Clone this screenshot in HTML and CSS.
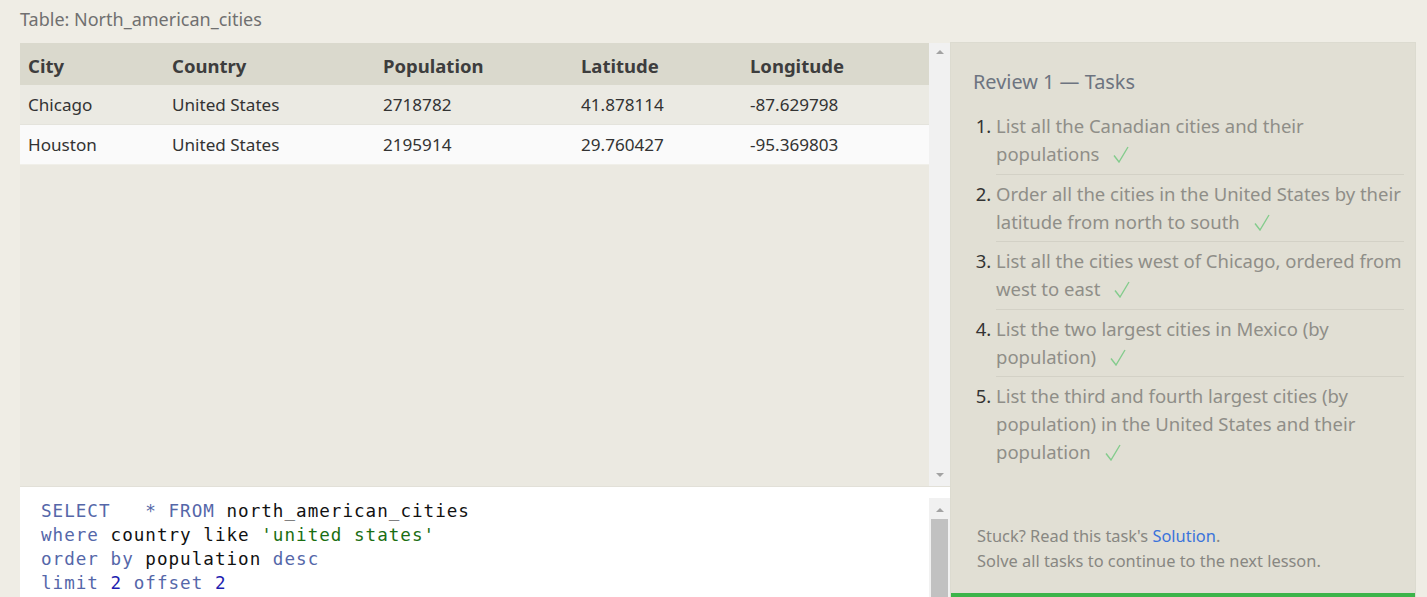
FILE: index.html
```html
<!DOCTYPE html>
<html>
<head>
<meta charset="utf-8">
<link rel="stylesheet" href="styles.css">
</head>
<body>
<div class="page">
  <div class="title">Table: North_american_cities</div>
  <div class="main">
    <div class="left">
      <div class="results">
        <div class="table-wrap">
          <table class="grid">
            <thead>
              <tr><th class="c1">City</th><th class="c2">Country</th><th class="c3">Population</th><th class="c4">Latitude</th><th class="c5">Longitude</th></tr>
            </thead>
            <tbody>
              <tr class="odd"><td>Chicago</td><td>United States</td><td>2718782</td><td>41.878114</td><td>-87.629798</td></tr>
              <tr class="even"><td>Houston</td><td>United States</td><td>2195914</td><td>29.760427</td><td>-95.369803</td></tr>
            </tbody>
          </table>
        </div>
        <div class="vscroll">
          <span class="arrow up"></span>
          <span class="arrow down"></span>
        </div>
      </div>
      <div class="editor">
        <pre class="code"><span class="kw">SELECT</span>   <span class="kw">*</span> <span class="kw">FROM</span> north_american_cities
<span class="kw">where</span> country like <span class="str">'united states'</span>
<span class="kw">order</span> <span class="kw">by</span> population <span class="kw">desc</span>
<span class="kw">limit</span> <span class="num">2</span> <span class="kw">offset</span> <span class="num">2</span></pre>
        <div class="escroll">
          <span class="arrow up"></span>
          <div class="thumb"></div>
        </div>
      </div>
    </div>
    <div class="right">
      <h2 class="heading">Review 1 — Tasks</h2>
      <ol class="tasks">
        <li>List all the Canadian cities and their populations<svg class="check" viewBox="0 0 16 17" width="16" height="17"><polyline points="1,9.5 6,16 15,1"/></svg></li>
        <li>Order all the cities in the United States by their latitude from north to south<svg class="check" viewBox="0 0 16 17" width="16" height="17"><polyline points="1,9.5 6,16 15,1"/></svg></li>
        <li>List all the cities west of Chicago, ordered from west to east<svg class="check" viewBox="0 0 16 17" width="16" height="17"><polyline points="1,9.5 6,16 15,1"/></svg></li>
        <li>List the two largest cities in Mexico (by population)<svg class="check" viewBox="0 0 16 17" width="16" height="17"><polyline points="1,9.5 6,16 15,1"/></svg></li>
        <li>List the third and fourth largest cities (by population) in the United States and their population<svg class="check" viewBox="0 0 16 17" width="16" height="17"><polyline points="1,9.5 6,16 15,1"/></svg></li>
      </ol>
      <div class="foot">
        <p>Stuck? Read this task's <a class="link" href="#">Solution</a>.</p>
        <p>Solve all tasks to continue to the next lesson.</p>
      </div>
      <div class="progress"></div>
    </div>
  </div>
</div>
</body>
</html>
```

FILE: styles.css
```css
html, body {
  margin: 0;
  padding: 0;
  background: #efede5;
  overflow: hidden;
}
body {
  font-family: "Noto Sans", "Open Sans", sans-serif;
  color: #333;
}
.page {
  width: 1427px;
  height: 597px;
  overflow: hidden;
  padding-left: 20px;
  box-sizing: border-box;
}
.title {
  height: 43px;
  line-height: 38px;
  font-size: 18px;
  color: #707070;
}
.main {
  display: flex;
  align-items: flex-start;
}
.left {
  width: 930px;
  display: flex;
  flex-direction: column;
}
.results {
  height: 443px;
  display: flex;
  background: #ebe9e1;
  border-bottom: 1px solid #e2e0d8;
}
.table-wrap {
  flex: 1;
}
.grid {
  width: 909px;
  border-collapse: collapse;
  table-layout: fixed;
}
.grid th, .grid td {
  text-align: left;
  padding: 0 0 0 8px;
  white-space: nowrap;
  box-sizing: border-box;
}
.grid th {
  height: 42px;
  padding-top: 3px;
  background: #dad9cd;
  font-weight: 700;
  font-size: 18.5px;
  color: #3d3d3d;
}
.grid td {
  height: 39.5px;
  font-size: 17.1px;
  color: #333;
}
.c1 { width: 144px; }
.c2 { width: 211px; }
.c3 { width: 198px; }
.c4 { width: 169px; }
.grid tr.odd td { background: #ebeae3; border-bottom: 1px solid #e4e3dc; }
.grid tr.even td { background: #fafafa; border-bottom: 1px solid #f0efe9; }
.vscroll {
  width: 21px;
  background: #f1f1f1;
  display: flex;
  flex-direction: column;
  justify-content: space-between;
  align-items: center;
  padding: 7px 0 9px;
  box-sizing: border-box;
}
.arrow {
  width: 0;
  height: 0;
  border-left: 4.5px solid transparent;
  border-right: 4.5px solid transparent;
}
.arrow.up { border-bottom: 4px solid #a3a3a3; }
.arrow.down { border-top: 4px solid #a3a3a3; }
.editor {
  height: 130px;
  background: #ffffff;
  display: flex;
}
.code {
  flex: 1;
  margin: 0;
  padding: 12px 0 0 21px;
  font-family: "DejaVu Sans Mono", "Liberation Mono", monospace;
  font-size: 17.6px;
  line-height: 24px;
  color: #111;
  letter-spacing: 1px;
}
.kw { color: #5567a9; }
.str { color: #1a6e12; }
.num { color: #1e1eb0; }
.escroll {
  width: 21px;
  margin-top: 11px;
  background: #f1f1f1;
  display: flex;
  flex-direction: column;
  align-items: center;
  padding-top: 10px;
  box-sizing: border-box;
}
.thumb {
  margin-top: 7px;
  width: 17px;
  flex: 1;
  background: #c1c1c1;
}
.right {
  width: 466px;
  height: 556px;
  margin-top: -1px;
  background: #e1dfd4;
  border: 1px solid #dcdbd0;
  border-bottom: none;
  box-sizing: border-box;
  display: flex;
  flex-direction: column;
}
.heading {
  margin: 24px 0 0 22px;
  font-weight: 400;
  font-size: 19.9px;
  line-height: 30px;
  color: #6d7480;
}
.tasks {
  margin: 10px 11px 0 22px;
  padding: 0 0 0 23px;
  font-size: 18.5px;
  line-height: 28px;
  color: #8f8e88;
}
.tasks li {
  padding: 5px 0 5.5px;
  border-bottom: 1px solid #d3d1c6;
}
.tasks li:last-child { border-bottom: none; }
.tasks li::marker {
  color: #333;
}
.check {
  margin-left: 14px;
  vertical-align: -2px;
  fill: none;
  stroke: #84cc8d;
  stroke-width: 1.4;
}
.foot {
  margin: auto 0 0 26px;
  padding-bottom: 20px;
  font-size: 16.4px;
  line-height: 25px;
  color: #888782;
}
.foot p { margin: 0; }
.link { color: #3a73db; text-decoration: none; }
.progress {
  height: 5px;
  background: #3cb44a;
}
```
